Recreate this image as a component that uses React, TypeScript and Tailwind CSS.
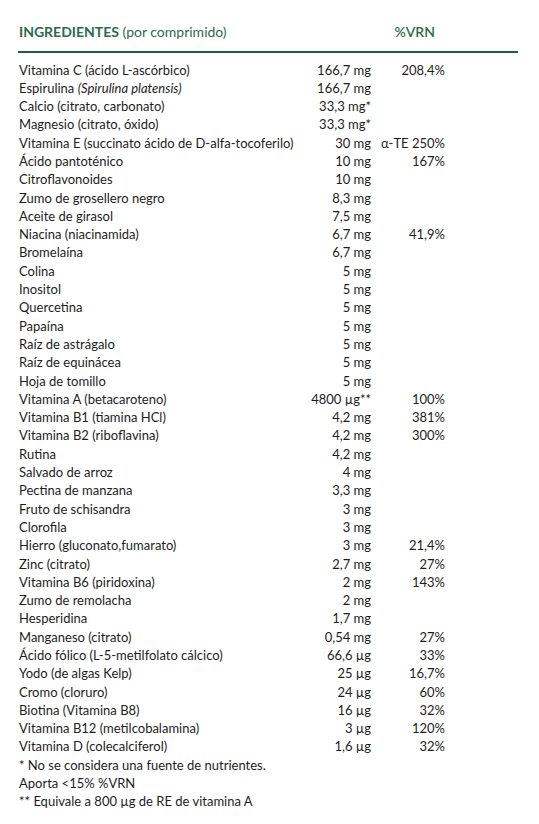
import React from 'react'

type Row = { name: React.ReactNode; amount: string; vrn?: string }

const ROWS: Row[] = [
  { name: 'Vitamina C (ácido L-ascórbico)', amount: '166,7 mg', vrn: '208,4%' },
  {
    name: (
      <>
        Espirulina <i>(Spirulina platensis)</i>
      </>
    ),
    amount: '166,7 mg',
  },
  { name: 'Calcio (citrato, carbonato)', amount: '33,3 mg*' },
  { name: 'Magnesio (citrato, óxido)', amount: '33,3 mg*' },
  { name: 'Vitamina E (succinato ácido de D-alfa-tocoferilo)', amount: '30 mg', vrn: 'α-TE 250%' },
  { name: 'Ácido pantoténico', amount: '10 mg', vrn: '167%' },
  { name: 'Citroflavonoides', amount: '10 mg' },
  { name: 'Zumo de grosellero negro', amount: '8,3 mg' },
  { name: 'Aceite de girasol', amount: '7,5 mg' },
  { name: 'Niacina (niacinamida)', amount: '6,7 mg', vrn: '41,9%' },
  { name: 'Bromelaína', amount: '6,7 mg' },
  { name: 'Colina', amount: '5 mg' },
  { name: 'Inositol', amount: '5 mg' },
  { name: 'Quercetina', amount: '5 mg' },
  { name: 'Papaína', amount: '5 mg' },
  { name: 'Raíz de astrágalo', amount: '5 mg' },
  { name: 'Raíz de equinácea', amount: '5 mg' },
  { name: 'Hoja de tomillo', amount: '5 mg' },
  { name: 'Vitamina A (betacaroteno)', amount: '4800 µg**', vrn: '100%' },
  { name: 'Vitamina B1 (tiamina HCl)', amount: '4,2 mg', vrn: '381%' },
  { name: 'Vitamina B2 (riboflavina)', amount: '4,2 mg', vrn: '300%' },
  { name: 'Rutina', amount: '4,2 mg' },
  { name: 'Salvado de arroz', amount: '4 mg' },
  { name: 'Pectina de manzana', amount: '3,3 mg' },
  { name: 'Fruto de schisandra', amount: '3 mg' },
  { name: 'Clorofila', amount: '3 mg' },
  { name: 'Hierro (gluconato,fumarato)', amount: '3 mg', vrn: '21,4%' },
  { name: 'Zinc (citrato)', amount: '2,7 mg', vrn: '27%' },
  { name: 'Vitamina B6 (piridoxina)', amount: '2 mg', vrn: '143%' },
  { name: 'Zumo de remolacha', amount: '2 mg' },
  { name: 'Hesperidina', amount: '1,7 mg' },
  { name: 'Manganeso (citrato)', amount: '0,54 mg', vrn: '27%' },
  { name: 'Ácido fólico (L-5-metilfolato cálcico)', amount: '66,6 µg', vrn: '33%' },
  { name: 'Yodo (de algas Kelp)', amount: '25 µg', vrn: '16,7%' },
  { name: 'Cromo (cloruro)', amount: '24 µg', vrn: '60%' },
  { name: 'Biotina (Vitamina B8)', amount: '16 µg', vrn: '32%' },
  { name: 'Vitamina B12 (metilcobalamina)', amount: '3 µg', vrn: '120%' },
  { name: 'Vitamina D (colecalciferol)', amount: '1,6 µg', vrn: '32%' },
]

export default function App() {
  return (
    <div className="w-[539px] min-h-[824px] bg-white pl-[19px] pt-[22px] font-['Lato',sans-serif] text-[13px] text-[#1d1d1b]">
      {/* Header */}
      <div className="flex w-[426px] items-baseline text-[14px] leading-[20px] text-[#2b6b48]">
        <div className="flex-1">
          <span className="font-bold">INGREDIENTES</span> (por comprimido)
        </div>
        <div className="w-[74px] pr-[10px] text-right font-semibold">%VRN</div>
      </div>
      <div className="mt-[9px] ml-[-1px] h-[1.5px] w-[500px] bg-[#1f5e3f]" />

      {/* Rows */}
      <div className="mt-[8px] leading-[18.3px]">
        {ROWS.map((row, i) => (
          <div key={i} className="flex w-[426px] whitespace-nowrap">
            <div className="flex-1">{row.name}</div>
            <div className="w-[64px] text-right">{row.amount}</div>
            <div className="w-[74px] text-right">{row.vrn}</div>
          </div>
        ))}
        <div>* No se considera una fuente de nutrientes.</div>
        <div>Aporta &lt;15% %VRN</div>
        <div>** Equivale a 800 µg de RE de vitamina A</div>
      </div>
    </div>
  )
}
